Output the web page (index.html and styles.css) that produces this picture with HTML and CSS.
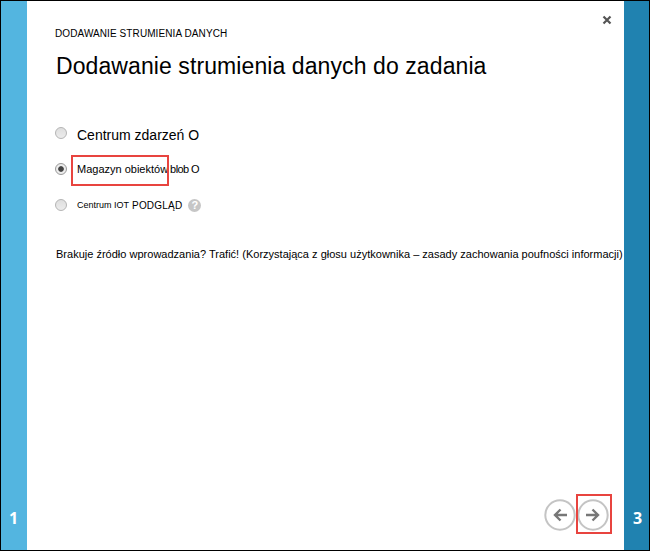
FILE: index.html
```html
<!DOCTYPE html>
<html lang="pl">
<head>
<meta charset="utf-8">
<title>Dodawanie strumienia danych</title>
<link rel="stylesheet" href="styles.css">
</head>
<body>
<div class="wizard">
  <aside class="step step-prev"><span>1</span></aside>
  <main class="page">
    <button class="close" aria-label="Zamknij"><svg width="10" height="10" viewBox="0 0 10 10"><path d="M1.5 1.5 8.5 8.5M8.5 1.5 1.5 8.5"/></svg></button>
    <header>
      <p class="eyebrow"><span>DODAWANIE STRUMIENIA DANYCH</span></p>
      <h1><span>Dodawanie strumienia danych do zadania</span></h1>
    </header>
    <div class="options">
      <label class="option first"><i class="radio"></i><span class="large">Centrum zdarzeń O</span></label>
      <label class="option second"><i class="radio checked"></i><span class="blob">Magazyn obiektów</span><span class="blob tail">blob O</span></label>
      <label class="option third"><i class="radio"></i><span class="iot">Centrum IOT</span><span class="preview">PODGLĄD</span><b class="help">?</b></label>
    </div>
    <p class="note"><span>Brakuje źródło wprowadzania? Trafić! (Korzystająca z głosu użytkownika – zasady zachowania poufności informacji)</span></p>
    <nav class="nav">
      <button class="arrow" aria-label="Wstecz"><svg width="32" height="32" viewBox="0 0 32 32"><circle cx="16" cy="16" r="14.7"/><path d="M23 16H11.5M16.5 10.5 11 16 16.5 21.5"/></svg></button>
      <button class="arrow next" aria-label="Dalej"><svg width="32" height="32" viewBox="0 0 32 32"><circle cx="16" cy="16" r="14.7"/><path d="M9 16H20.5M15.5 10.5 21 16 15.5 21.5"/></svg></button>
    </nav>
  </main>
  <aside class="step step-next"><span>3</span></aside>
</div>
</body>
</html>
```
FILE: styles.css
```css
*, *::after { box-sizing: border-box; }
body { margin: 0; font-family: "Liberation Sans", Arial, sans-serif; color: #000; }
p, h1 { margin: 0; font-weight: 400; white-space: nowrap; }
button { padding: 0; border: 0; background: none; display: block; }
svg { display: block; }
.wizard { width: 650px; height: 551px; border: 1px solid #000; display: flex; background: #fff; }
.step { display: flex; align-items: flex-end; justify-content: center; padding-bottom: 21px; color: #fff; font: 700 16px/22px "Open Sans", sans-serif; }
.step-prev { width: 26px; background: #53b5e0; padding-right: 1px; }
.step-next { width: 25px; background: #2082b0; padding-left: 2px; }
.page { flex: 1; min-width: 0; display: flex; flex-direction: column; padding-left: 28px; position: relative; }
.close { position: absolute; top: 14px; right: 12px; }
.close path { stroke: #555; stroke-width: 2.2; fill: none; }
.eyebrow { margin-top: 26px; font-size: 10px; line-height: 14px; letter-spacing: 0.09px; }
h1 { margin: 9px 0 0 1px; font-size: 23px; line-height: 32px; letter-spacing: 0.09px; }
.options { margin-top: 41px; }
.option { display: flex; align-items: center; white-space: nowrap; position: relative; }
.radio { width: 12px; height: 12px; margin-right: 10px; border: 1px solid #b4b4b4; border-radius: 50%; background: linear-gradient(#dedede, #ececec); flex: none; }
.checked { background: radial-gradient(circle, #444 0 2.4px, #ececec 3.2px); border-color: #999; }
.first { height: 24px; }
.first .radio { margin-top: -5px; }
.large { font-size: 14px; }
.second { height: 24px; margin-top: 10px; }
.second::after { content: ""; position: absolute; left: 16px; top: -2px; width: 98px; height: 31px; border: 2px solid #e8443f; }
.blob { font-size: 11px; }
.tail { margin-left: 2px; letter-spacing: -0.6px; }
.third { height: 24px; margin-top: 12px; }
.iot { font-size: 9px; }
.preview { font-size: 10px; margin-left: 3px; letter-spacing: 0.2px; }
.help { width: 13px; height: 13px; margin-left: 6px; border-radius: 50%; background: #c6c6c6; color: #fff; font-size: 11px; line-height: 13px; text-align: center; }
.note { margin: 29px 0 0 1px; font-size: 11px; line-height: 16px; letter-spacing: 0.01px; }
.nav { display: flex; gap: 1px; margin: auto 15px 19px auto; }
.arrow { position: relative; }
.arrow circle { fill: none; stroke: #c4c4c4; stroke-width: 2; }
.arrow path { fill: none; stroke: #777; stroke-width: 2.4; }
.next::after { content: ""; position: absolute; left: -1px; top: -5px; width: 36px; height: 40px; border: 2px solid #e8443f; }
```
